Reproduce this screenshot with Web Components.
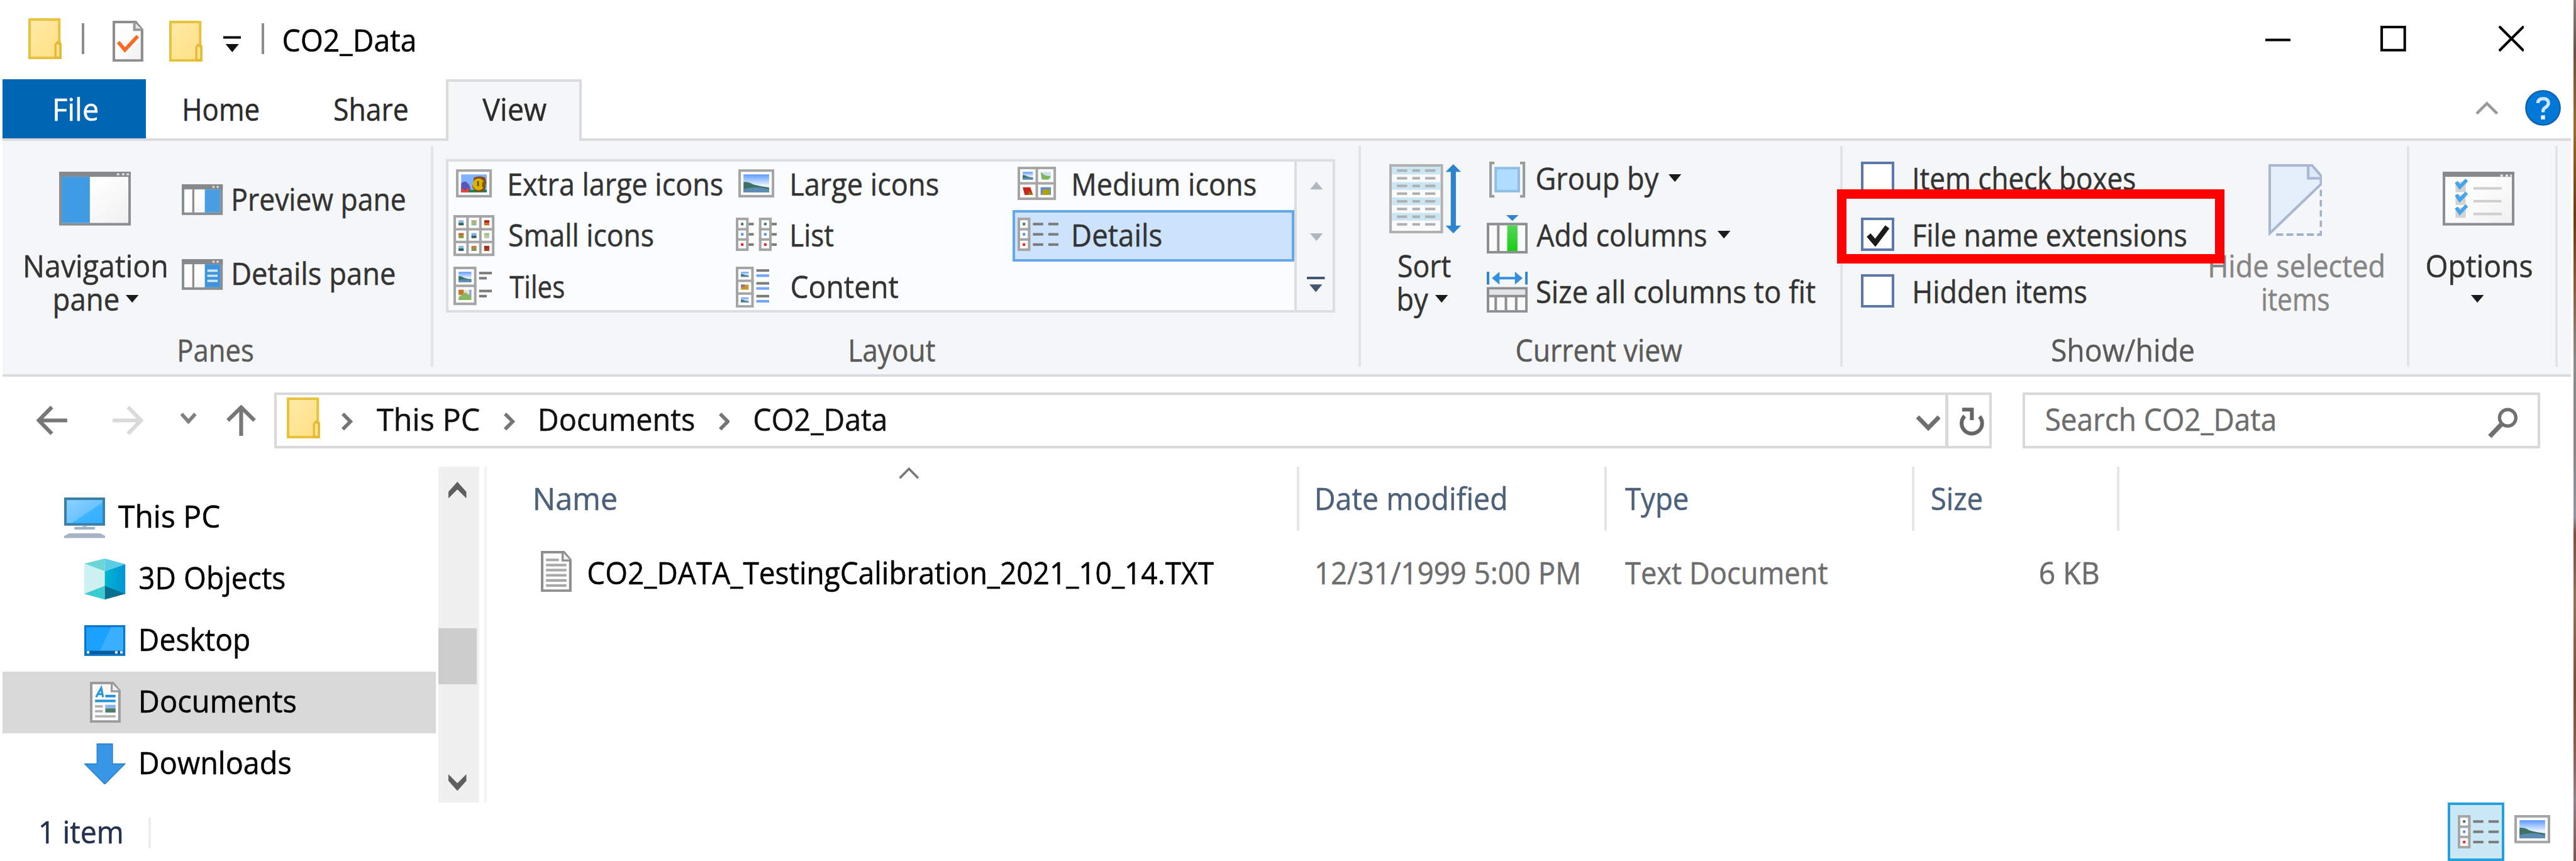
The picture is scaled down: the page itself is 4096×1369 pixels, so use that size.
<!DOCTYPE html>
<html lang="en">
<head>
<meta charset="utf-8">
<title>CO2_Data</title>
<style>
  html, body { margin: 0; padding: 0; background: #fff; overflow: hidden; }
  body { font-family: "Open Sans", "Noto Sans", sans-serif; }
</style>
</head>
<body>
<explorer-window></explorer-window>
<script>
/* Lengths are in desktop pixels (1005 x 336); the window element zooms them. */
const FONT = 12.3;
const FAMILY = '"Open Sans", "Noto Sans", sans-serif';
const measure = document.createElement('canvas').getContext('2d');

function define(name, css, html, setup) {
  const tpl = document.createElement('template');
  tpl.innerHTML = `<style>:host{display:block;box-sizing:border-box;flex:none}*{box-sizing:border-box}${css}</style>${html}`;
  customElements.define(name, class extends HTMLElement {
    connectedCallback() {
      if (this.shadowRoot) return;
      this.attachShadow({ mode: 'open' }).append(tpl.content.cloneNode(true));
      if (setup) setup(this, this.shadowRoot);
    }
  });
}

/* A label whose ink fills exactly w pixels. */
define('x-text', `
  :host{height:16px;line-height:16px;font-size:${FONT}px;white-space:nowrap;-webkit-text-stroke:.13px currentColor}
  :host([tight]){height:13px;line-height:13px}
  span{display:block;width:max-content;margin-top:.2px;transform-origin:0 0}`,
  `<span></span>`, (el, root) => {
  const s = root.querySelector('span'), t = el.getAttribute('t'), w = +el.getAttribute('w');
  s.textContent = t;
  measure.font = `100px ${FAMILY}`;
  const m = measure.measureText(t), k = FONT / 100;
  const left = -m.actualBoundingBoxLeft * k, ink = (m.actualBoundingBoxRight + m.actualBoundingBoxLeft) * k;
  const sx = w / ink;
  el.style.width = w + 'px';
  s.style.transform = `translate(var(--nx,0px),var(--ny,0px)) matrix(${sx},0,0,1,${-left * sx},0)`;
});

const pic = (x, y, w, h) => `<rect x="${x}" y="${y}" width="${w}" height="${h}" fill="url(#sky)"/><path d="M${x} ${y + h * .42}q${w * .2} -${h * .02} ${w * .4} ${h * .15}q${w * .3} ${h * .12} ${w * .6} ${h * .16}v${h * .27}h-${w}z" fill="#3d7263"/><path d="M${x} ${y + h * .82}q${w * .5} -${h * .2} ${w} ${h * .02}v${h * .16}h-${w}z" fill="#5c8bb5"/>`;
const dot = (x, y, a, b) => `<rect x="${x}" y="${y}" width="2" height="1" fill="${a}"/><rect x="${x}" y="${y + 1}" width="2" height="1" fill="${b}"/>`;
const dash = (x, y, w, c) => `<rect x="${x}" y="${y}" width="${w}" height="1" fill="${c || '#7b7b7b'}"/>`;
const cells = (x, y, w, h) => `<rect x="${x + .5}" y="${y + .5}" width="${w - 1}" height="${h - 1}" fill="#fff" stroke="#a5a5a5"/>`;
const folder = `<path d="M.5.5h11.6v9l.9.9v5.1H.5z" fill="url(#fold)" stroke="#e8c13d"/><path d="M10.6 15.3v-5l.7-.9 1.2 1v4.9z" fill="#ffe38c" stroke="#e3b935" stroke-width=".8"/>`;
const pane = (w, h, body) => `<rect x=".5" y=".5" width="${w - 1}" height="${h - 1}" fill="url(#pap)" stroke="#8a8e91"/><rect width="${w}" height="2" fill="#85898c"/>${body}`;
const chev = (w, h, d, c, sw) => [w, h, `<path d="${d}" fill="none" stroke="${c}" stroke-width="${sw}"/>`];
const lists = x => cells(x, 1, 5, 13) + `<path d="M${x} 5.5h5M${x} 9.5h5" stroke="#a5a5a5"/><rect x="${x + 2}" y="3" width="1" height="1" fill="#3b7a63"/><rect x="${x + 2}" y="7" width="1" height="1" fill="#4f8dff"/><rect x="${x + 2}" y="11" width="1" height="1" fill="#e22"/>`;

const ICONS = {
  folder: [13, 16, folder],
  props: [12, 16, `<path d="M.5.5H9l2.5 3v12H.5z" fill="url(#pap)" stroke="#8d8d8d"/><path d="M8.5.5v3h3" fill="#e8e8e8" stroke="#9a9a9a"/><path d="M2.2 8.3l2.6 3.1 5-5.4" fill="none" stroke="#fb6a22" stroke-width="1.4"/>`],
  custom: [7, 7, `<path d="M0 .1h7v1H0zM.9 3.2h5.2L3.5 6.4z" fill="#111"/>`],
  min: [10, 10, `<path d="M0 5.5h10" stroke="#000"/>`],
  max: [10, 10, `<path d="M.5.5h9v9h-9z" fill="none" stroke="#000"/>`],
  close: [10, 10, `<path d="M.2.2l9.6 9.6M9.8.2L.2 9.8" fill="none" stroke="#000" stroke-width="1"/>`],
  collapse: chev(9, 6, 'M.5 5.3l4-4 4 4', '#9a9a9a', 1.1),
  help: [14, 14, `<circle cx="7" cy="7" r="6.7" fill="#0078d7" stroke="#0d5fa8" stroke-width=".5"/><path d="M5 5.1Q5.1 3.4 7.1 3.4t2 1.7Q9.1 6.2 7.7 7 7 7.4 7 8.7" fill="none" stroke="#cfe6fb" stroke-width="1.3"/><rect x="6.2" y="9.9" width="1.6" height="1.6" fill="#e6f2fd"/>`],
  nav: [28, 21, pane(28, 21, `<rect x="1" y="2" width="11" height="18" fill="#3f9be3"/><path d="M22.5 1h1M24.5 1h1M26.3 1h1" stroke="#dedede" stroke-width=".8"/>`)],
  preview: [16, 12, pane(16, 12, `<path d="M4.5 2v9" stroke="#8a8e91" stroke-width=".8"/><rect x="9" y="2" width="6" height="9" fill="#4a9fe3"/><path d="M12 1h.8M13.6 1h.8" stroke="#dedede" stroke-width=".8"/>`)],
  details: [16, 12, pane(16, 12, `<path d="M4.5 2v9" stroke="#8a8e91" stroke-width=".8"/><rect x="9" y="2" width="6" height="9" fill="#3f95dc"/><path d="M10 4.5h4M10 6.5h4M10 8.5h4" stroke="#cfe6f8" stroke-width=".9"/><path d="M12 1h.8M13.6 1h.8" stroke="#dedede" stroke-width=".8"/>`)],
  tri: [5, 3, `<path d="M0 0h5L2.5 3z" fill="#1b1b1b"/>`],
  xl: [16, 16, cells(1, 2, 14, 11) + `<rect x="3" y="4" width="10" height="7" fill="#7fb1ff"/><path d="M3 7.5q2-2 3.6 1.6V11H3z" fill="#5a55b8"/><path d="M3 9.2l1.5 1 1.5-1 1 1.8H3z" fill="#e8413a"/><rect x="6" y="10" width="7" height="1" fill="#16824a"/><path d="M8 5.2q2-.8 4.4 0l.4 2-.6 3.2-3.2.6-1.6-2z" fill="#8a4a17"/><circle cx="9.8" cy="7.9" r="2.3" fill="#d9b300"/><path d="M9.6 6.6v2M11.6 7v2" stroke="#6b5200" stroke-width=".7"/>`],
  large: [16, 16, cells(1, 2, 14, 11) + pic(3, 4, 10, 7)],
  medium: [16, 16, cells(0, 1, 15, 13) + `<path d="M7.5 1v13M0 7.5h15" stroke="#a5a5a5"/>` + pic(2, 3, 4, 3) + `<path d="M9 3h4v3H9z" fill="#cfe0f5"/><path d="M9 3.2l2 1.3 2 .2-1 1.3H9.600z" fill="#7cb656"/><path d="M2 9h3l1 3H2.800z" fill="#c9281a"/><path d="M4.500 10.500L6 12H4z" fill="#8d7a10"/><path d="M9 9h4v3H9z" fill="#5c8ad8"/><path d="M9.800 9.800h3l-.5 2.200H9.500z" fill="#b0a10a"/>`],
  small: [16, 16, cells(0, 0, 16, 16) + `<path d="M5.500 0v16M10.500 0v16M0 5.500h16M0 10.500h16" stroke="#a5a5a5"/>` +
    dot(2, 2, '#8fb9e8', '#2d6360') + dot(7, 2, '#b7a58f', '#8cc07a') + dot(12, 2, '#b32318', '#cc6a1c') +
    dot(2, 7, '#c8603a', '#8a9a2c') + dot(7, 7, '#7fb2e6', '#2d6360') + dot(12, 7, '#9cc489', '#b3c9ae') +
    dot(2, 12, '#8fb9e8', '#2d6360') + dot(7, 12, '#c97a3c', '#7a9a5c') + dot(12, 12, '#b32318', '#a5401a')],
  list: [16, 16, lists(0) + lists(9) + [3, 7, 11].map(y => dash(5, y, 2) + dash(14, y, 2)).join('')],
  detailsview: [16, 16, lists(0) + [3, 7, 11].map(y => dash(6, y, 4) + dash(12, y, 4)).join('')],
  tiles: [16, 16, cells(0, 0, 9, 15) + `<path d="M0 7.500h9" stroke="#a5a5a5"/>` + pic(2, 2, 5, 4) + `<path d="M2 9h5v4H2z" fill="#dfe8d8"/><path d="M2 9h2v2H2z" fill="#d0702c"/><path d="M6.200 9H7v2.500h-.8z" fill="#9d9be0"/><path d="M2 12l2.500-2 2.500 1.500V13H2z" fill="#86b860"/>` + dash(10, 2, 5) + dash(10, 4, 3) + dash(10, 9, 5) + dash(10, 11, 3)],
  content: [16, 16, cells(0, 0, 7, 16) + `<path d="M0 5.500h7M0 10.500h7" stroke="#a5a5a5"/>` + pic(2, 2, 3, 2) + `<path d="M2 7h3v2H2z" fill="#c4982a"/><path d="M2 7h1.500v1H2z" fill="#9f6d9a"/>` + pic(2, 12, 3, 2) + [1, 6, 11].map(y => dash(8, y, 5) + dash(8, y + 2, 5, '#70a5ff')).join('')],
  up5: [5, 3, `<path d="M0 3h5L2.500 0z" fill="#b0b7c1"/>`],
  down5: [5, 3, `<path d="M0 0h5L2.500 3z" fill="#b0b7c1"/>`],
  more: [7, 6, `<path d="M0 0h7v1H0zM1 3h5L3.500 6z" fill="#44566f"/>`],
  sort: [29, 27, `<rect x=".5" y=".5" width="20" height="26" fill="#fafafa" stroke="#b0b0b0"/>` +
    [0, 2, 4, 6].map(i => `<rect x="1" y="${1 + i * 3}" width="19" height="3" fill="#cbe6f3"/>`).join('') +
    [0, 1, 2, 3, 4, 5, 6, 7].map(i => dash(3, 2 + i * 3, 4, '#b0b0b0') + dash(9, 2 + i * 3, 3, '#b0b0b0') + dash(14, 2 + i * 3, 4, '#b0b0b0')).join('') +
    `<path d="M25 0l3 3h-2v21h2l-3 3-3-3h2V3h-2z" fill="#2b84cd"/>`],
  group: [16, 16, `<path d="M3 1.500H1.500v13H3M13 1.500h1.500v13H13" fill="none" stroke="#9a9a9a"/><rect x="3.500" y="3.500" width="9" height="9" fill="#b0dcff" stroke="#90bfe6"/>`],
  addcol: [16, 16, `<path d="M7.600 0h4.800L10 2.300z" fill="#2f86cf"/><rect x=".5" y="3.500" width="15" height="11" fill="#fafafa" stroke="#8d9093"/><path d="M4.500 4v10" stroke="#8d9093"/><rect x="8" y="4" width="4" height="10" fill="url(#grn)"/>`],
  sizecol: [16, 16, `<path d="M.5 0v5M15.500 0v5" stroke="#2f86cf"/><path d="M2 2.500L5 0v2h6V0l3 2.500L11 5V3H5v2z" fill="#3490df"/><rect x=".5" y="6.500" width="15" height="9" fill="#fafafa" stroke="#8d9093"/><rect x="1" y="7" width="14" height="2" fill="#e4e4e4"/><path d="M0 9.500h16M3.500 9v6M7.500 9v6M11.500 9v6" stroke="#8d9093"/>`],
  hide: [21, 28, `<path d="M.5 27V.5H17l3.500 4V7.800z" fill="#e5eefb" stroke="#a9b8d2"/><path d="M15.500.5v5h5" fill="#dfe8f6" stroke="#a9b8d2"/><path d="M20.500 10v2.500M20.500 14v2.500M20.500 18v2.500M20.500 22v2.500M20.500 26v1.500M3 27.500h2.700M7 27.500h2.700M11 27.500h2.700M15 27.500h2.700M19 27.500h2" stroke="#a0b1cd"/>`],
  options: [28, 21, pane(28, 21, `<path d="M22.500 1.500h1M24.500 1.500h1M26.300 1.500h.7" stroke="#e8e8e8" stroke-width=".8"/>` + [4, 9, 14].map(y => `<rect x="5" y="${y}" width="4" height="4" fill="#d3d3d3"/><path d="M5.300 ${y}l1.400 2L9.400 ${y - .8}" fill="none" stroke="#45a4ea" stroke-width="1.400"/>` + dash(12, y + 2, 11, '#cfcfcf')).join(''))],
  back: [12, 12, `<path d="M.8 6h11.200M6 .8L.9 6 6 11.200" fill="none" stroke="#777" stroke-width="1.500"/>`],
  fwd: [12, 12, `<path d="M0 6h11.200M6 .8L11.100 6 6 11.200" fill="none" stroke="#dadada" stroke-width="1.500"/>`],
  recent: chev(6.200, 4.500, 'M.4.500l2.700 3 2.700-3', '#808080', 1.400),
  upnav: [12, 12, `<path d="M6 12V1M.8 6L6 .9 11.200 6" fill="none" stroke="#777" stroke-width="1.500"/>`],
  crumb: chev(4.400, 7, 'M.5.500l3 3-3 3', '#757575', 1.400),
  drop: chev(9.400, 6, 'M.5.700l4.200 4.300L8.900.700', '#6f6f6f', 1.700),
  refresh: [10, 11.500, `<path d="M2.200 3.300A4 4 0 1 0 8 3.500" fill="none" stroke="#666" stroke-width="1.500"/><path d="M1.200.800H5V4.900" fill="none" stroke="#666" stroke-width="1.500"/>`],
  search: [12, 12, `<circle cx="7.700" cy="4" r="3.200" fill="none" stroke="#707070" stroke-width="1.300"/><path d="M5.400 6.400L.7 11.300" stroke="#707070" stroke-width="1.800"/>`],
  sbup: [7, 6.500, `<path d="M0 6.500V3.900L3.500 0 7 3.900v2.600L3.500 3z" fill="#5f5f5f"/>`],
  sbdown: [7, 6.500, `<path d="M0 0v2.600l3.500 3.900L7 2.600V0L3.500 3.500z" fill="#5f5f5f"/>`],
  sortcaret: chev(8, 5, 'M.4 4.500L4 .8l3.600 3.700', '#777', .9),
  pc: [16, 16, `<rect x=".5" y=".5" width="15" height="10" fill="url(#scr)" stroke="#3a7fa8"/><rect x="7.200" y="11" width="1.600" height="1" fill="#b5c3cf"/><rect x="4" y="11.500" width="8" height="1" fill="#9db0c4"/><path d="M2 14h12l2 1v.8H0V15z" fill="#a6b4c6"/>`],
  cube: [16, 16, `<path d="M0 2l8-2v5z" fill="#6ad6d6"/><path d="M8 0l8 2.200L8 5z" fill="#5ccbe6"/><path d="M0 2l8 3v6l-8 3z" fill="#cdf0f0"/><path d="M16 2.200L8 5v6l8 3z" fill="url(#cb)"/><path d="M0 13.800L8 10.700V16z" fill="#38cbd0"/><path d="M8 10.700l8 3.100L8 16z" fill="#0a6f8c"/>`],
  desktop: [16, 12, `<rect x=".4" y=".4" width="15.200" height="11.200" fill="#1ba1ff" stroke="#0b78cc" stroke-width=".8"/><path d="M10.500.8h4.700v9.200H6z" fill="#3aaeff"/><rect x=".8" y="10" width="14.400" height="1.300" fill="#0b5c96"/><path d="M1 10.600h1M12 10.600h1M14 10.600h1" stroke="#e8f4fd"/>`],
  docs: [12, 16, `<path d="M.5.5H9l2.500 3v12H.5z" fill="#fbfbfb" stroke="#9b9b9b"/><path d="M8.500.5v3.200h3" fill="#f2f2f2" stroke="#9b9b9b" stroke-width=".8"/><path d="M2.400 6l2-3.600.7 3.600M3.200 4.800h2" fill="none" stroke="#2a97dc" stroke-width=".8"/><path d="M6 5.600h4M2 7.500h8" stroke="#2493da"/><path d="M2 9.600h3M2 11.500h3M2 13.500h8" stroke="#b0b0b0" stroke-width=".9"/><rect x="6" y="9" width="4" height="1.400" fill="#8eb4f5"/><rect x="6" y="10.400" width="4" height="1.600" fill="#4c7a63"/>`],
  download: [16, 16, `<path d="M5 .200h6V8h4.800L8 15.900.2 8H5z" fill="#3797e6" stroke="#2f83c9" stroke-width=".4"/>`],
  text: [12, 16, `<path d="M.5.5H9l2.500 3v12H.5z" fill="#fbfbfb" stroke="#8f8f8f"/><path d="M8.500.5v3.200h3" fill="#f2f2f2" stroke="#8f8f8f" stroke-width=".8"/><path d="M2 3.500h5M2 5.500h8M2 7.500h8M2 9.500h8M2 11.500h8M2 13.500h8" stroke="#a8a8a8" stroke-width="1"/>`],
  thumbs: [14, 11, cells(0, 0, 14, 11) + pic(2, 2, 10, 7)],
  check: [13, 13, `<path d="M3 6.800l2.600 3L10.300 3.600" fill="none" stroke="#1b1b1b" stroke-width="2"/>`],
};
const DEFS = `<defs><linearGradient id="sky" x2="0" y2="1"><stop stop-color="#5c9aff"/><stop offset=".6" stop-color="#e6f2fd"/></linearGradient>
<linearGradient id="fold" x2="1" y2="1"><stop stop-color="#ffeaa8"/><stop offset="1" stop-color="#ffdf80"/></linearGradient>
<linearGradient id="pap" x2="1" y2="1"><stop offset=".4" stop-color="#fdfdfd"/><stop offset="1" stop-color="#f0f0f0"/></linearGradient>
<linearGradient id="grn" x2="0" y2="1"><stop stop-color="#55d555"/><stop offset="1" stop-color="#17cf17"/></linearGradient>
<linearGradient id="scr" x2="1" y2="1"><stop offset=".1" stop-color="#87cfff"/><stop offset=".55" stop-color="#6cc4ff"/><stop offset=".56" stop-color="#3fb4ff"/><stop offset="1" stop-color="#33aeff"/></linearGradient>
<linearGradient id="cb" x2="1" y2="0"><stop stop-color="#00b6cf"/><stop offset="1" stop-color="#0093d8"/></linearGradient></defs>`;
define('x-icon', `svg{display:block}`, ``, (el, root) => {
  const [w, h, body] = ICONS[el.getAttribute('name')];
  el.style.width = w + 'px'; el.style.height = h + 'px';
  root.innerHTML += `<svg width="${w}" height="${h}" viewBox="0 0 ${w} ${h}">${DEFS}${body}</svg>`;
});

/* Markup helpers: m(left, top) gives the margin in front of an item. */
const m = (l, t = 0) => `style="margin:${t}px 0 0 ${l}px"`;
const T = (t, w, l = 0, top = 0, color = '', tight = '') => `<x-text ${tight} t="${t}" w="${w}" style="margin:${top}px 0 0 ${l}px${color ? ';color:' + color : ''}"></x-text>`;
const I = (n, l = 0, top = 0) => `<x-icon name="${n}" ${m(l, top)}></x-icon>`;

define('title-bar', `:host{display:flex;align-items:flex-start;height:31px;padding-right:19.300px;color:#000;--nx:.3px;--ny:.2px}
  .sep{width:1px;height:12px;background:#8c8c8c}.gap{flex:1}`,
  I('folder', 11, 7) + `<div class="sep" ${m(8, 9)}></div>` + I('props', 11, 8) + I('folder', 10, 8) + I('custom', 8, 14) +
  `<div class="sep" ${m(8, 9)}></div>` + T('CO2_Data', 51, 7.5, 7) + `<div class="gap"></div>` + I('min', 0, 10) + I('max', 35, 10) + I('close', 36, 10));

define('ribbon-tabs', `:host{display:flex;align-items:flex-start;height:24px;margin-left:1px;width:1002px;border-bottom:1px solid #dadbdc;color:#2b2b2b;--nx:.3px;--ny:.3px}
  .file{display:flex;width:56px;height:23px;background:#0065b3;color:#fff}
  .view{display:flex;width:53px;height:24px;background:#f5f6f7;border:1px solid #dadbdc;border-bottom:0}.gap{flex:1}`,
  `<div class="file">${T('File', 16.6, 20, 3)}</div>` + T('Home', 28.9, 14.6, 3) + T('Share', 28.3, 29.9, 3) +
  `<div class="view" ${m(15.3)}>${T('View', 25, 13, 2)}</div><div class="gap"></div>` + I('collapse', 0, 8) + `<x-icon name="help" style="margin:4px 3.800px 0 10.500px"></x-icon>`);

define('ribbon-group', `:host{display:flex;flex-direction:column;height:91px}
  .body{display:flex;align-items:flex-start;height:73px}`, `<div class="body"><slot></slot></div><slot name="label"></slot>`);
define('ribbon-sep', `:host{width:1px;height:86px;margin-top:2px;background:#e2e3e4}`, ``);
define('ribbon-column', `:host{display:flex;flex-direction:column;align-items:flex-start}`, `<slot></slot>`);
define('x-row', `:host{display:flex;align-items:flex-start}`, `<slot></slot>`);

define('gallery-item', `:host{display:flex;align-items:flex-start;width:110px;height:20px}
  :host([selected]){background:#cce3fb;box-shadow:inset 0 0 0 1px #66a7e8}`, `<slot></slot>`);
const G = (icon, t, w, sel = '', l = 5.600) => `<gallery-item ${sel}>${I(icon, 2, 2)}${T(t, w, l, 1)}</gallery-item>`;
define('layout-gallery', `:host{display:flex;width:347px;height:60px;background:#fafcfe;box-shadow:inset 0 0 0 1px #dcdddf}
  .grid{display:grid;grid-template-columns:110px 110px 110px;grid-auto-rows:20px;padding-left:1px;width:331px}
  .scroll{display:flex;flex-direction:column;width:15px;margin:1px 1px 1px 0;border-left:1px solid #dcdddf;background:#f5f6f7}`,
  `<div class="grid">${G('xl', 'Extra large icons', 83)}${G('large', 'Large icons', 57)}${G('medium', 'Medium icons', 71)}` +
  `${G('small', 'Small icons', 56)}${G('list', 'List', 16.2)}${G('detailsview', 'Details', 34.2, 'selected')}` +
  `${G('tiles', 'Tiles', 21.2, '', 5.4)}${G('content', 'Content', 41.500)}</div>` +
  `<div class="scroll">${I('up5', 5, 8)}${I('down5', 5, 17)}${I('more', 4, 14)}</div>`);

define('check-item', `:host{display:flex;align-items:flex-start;height:22px}
  .box{width:13px;height:13px;margin-top:2px;background:#fff;box-shadow:inset 0 0 0 1px #5c77a9}`,
  `<div class="box"></div><slot></slot>`, (el, root) => {
  if (el.hasAttribute('checked')) root.querySelector('.box').innerHTML = '<x-icon name="check"></x-icon>';
});

const L = (t, w, l) => `<x-text slot="label" t="${t}" w="${w}" style="margin-left:${l}px;color:#5a5a5a"></x-text>`;
define('ribbon-bar', `:host{display:flex;position:relative;margin-left:1px;width:1002px;height:92px;background:#f5f6f7;border-bottom:1px solid #dadbdc;color:#333;--nx:.3px;--ny:.3px}
  .mark{position:absolute;left:715.700px;top:18.900px;width:151.200px;height:28.800px;border:3.800px solid #f00}`,
  `<ribbon-group style="width:167px"><ribbon-column style="width:70px">${I('nav', 22, 12)}${T('Navigation', 55, 8.600, 8.500, '', 'tight')}
     <x-row>${T('pane', 24.700, 20, 0, '', 'tight')}${I('tri', 3.500, 5.500)}</x-row></ribbon-column>
   <ribbon-column><x-row style="margin-top:14px">${I('preview', 0, 3)}${T('Preview pane', 66.800, 3.800)}</x-row>
     <x-row style="margin-top:13px">${I('details', 0, 3)}${T('Details pane', 62.800, 3.800)}</x-row></ribbon-column>
   ${L('Panes', 28.700, 68.700)}</ribbon-group><ribbon-sep></ribbon-sep>` +
  `<ribbon-group style="width:361px"><layout-gallery ${m(5, 7)}></layout-gallery>${L('Layout', 33, 162.600)}</ribbon-group><ribbon-sep></ribbon-sep>` +
  `<ribbon-group style="width:187px"><ribbon-column style="width:38px;margin-left:11px">${I('sort', 0, 9)}${T('Sort', 20.200, 3.500, 5.500, '', 'tight')}
     <x-row>${T('by', 11.500, 3.500, 0, '', 'tight')}${I('tri', 3, 5.500)}</x-row></ribbon-column>
   <ribbon-column style="margin-top:6px"><x-row style="height:22px">${I('group', 0, 1)}${T('Group by', 47.500, 3.500)}${I('tri', 4, 7)}</x-row>
     <x-row style="height:22px">${I('addcol', 0, 1)}${T('Add columns', 66.200, 3.300)}${I('tri', 4.500, 7)}</x-row>
     <x-row style="height:22px">${I('sizecol', 0, 1)}${T('Size all columns to fit', 108.500, 3.500)}</x-row></ribbon-column>
   ${L('Current view', 64.400, 60.600)}</ribbon-group><ribbon-sep></ribbon-sep>` +
  `<ribbon-group style="width:220px"><ribbon-column style="margin:6px 0 0 7px;width:136px">
     <check-item>${T('Item check boxes', 86, 7.600)}</check-item><check-item checked>${T('File name extensions', 106, 7.600)}</check-item><check-item>${T('Hidden items', 67, 7.600)}</check-item></ribbon-column>
   <ribbon-column>${I('hide', 23, 9)}${T('Hide selected', 67.500, 0, 4.500, '#858585', 'tight')}${T('items', 25.700, 20.700, 0, '#858585', 'tight')}</ribbon-column>
   ${L('Show/hide', 55.100, 81.500)}</ribbon-group><ribbon-sep></ribbon-sep>` +
  `<ribbon-group style="width:57px"><ribbon-column>${I('options', 13, 12)}${T('Options', 40.900, 6.700, 7)}${I('tri', 24, 4)}</ribbon-column></ribbon-group><ribbon-sep></ribbon-sep>
   <div class="mark"></div>`);

define('address-bar', `:host{display:flex;align-items:flex-start;height:35px;padding-top:6px;color:#111;--ny:.2px}
  .box{display:flex;align-items:flex-start;height:22px;border:1px solid #d9d9d9;background:#fff}.gap{flex:1}
  .div{width:1px;height:20px;background:#d9d9d9}`,
  I('back', 14.200, 5) + I('fwd', 17.800, 5) + I('recent', 14.500, 8) + I('upnav', 11.500, 5) +
  `<div class="box" style="margin-left:6.800px;width:670px">${I('folder', 4, 1)}${I('crumb', 8.200, 7)}${T('This PC', 40, 9.400, 1)}${I('crumb', 9.700, 7)}${T('Documents', 60, 9.800, 1)}${I('crumb', 9.500, 7)}${T('CO2_Data', 51, 9.800, 1)}
   <div class="gap"></div>${I('drop', 0, 8)}<div class="div" ${m(2)}></div><x-icon name="refresh" style="margin:5px 1.600px 0 4.400px"></x-icon></div>
   <div class="box" style="margin-left:12px;width:202px;color:#6d6d6d">${T('Search CO2_Data', 89, 8.400, 1)}<div class="gap"></div><x-icon name="search" style="margin:5px 7.400px 0 0"></x-icon></div>`);

define('nav-item', `:host{display:flex;align-items:flex-start;height:24px;width:169px;padding-left:24px}
  :host([child]){padding-left:32px}:host([selected]){background:#d9d9d9}`, `<slot></slot>`);
define('nav-tree', `:host{width:170px;padding:8px 0 0 1px;color:#000}`,
  `<nav-item>${I('pc', 0, 4)}${T('This PC', 39.500, 5.200, 3)}</nav-item>
   <nav-item child>${I('cube', 0, 4)}${T('3D Objects', 56.600, 5.500, 3)}</nav-item>
   <nav-item child>${I('desktop', 0, 6)}${T('Desktop', 42.200, 6, 3)}</nav-item>
   <nav-item child selected>${I('docs', 2, 4)}${T('Documents', 60.400, 8, 3)}</nav-item>
   <nav-item child>${I('download', 0, 4)}${T('Downloads', 58.400, 6, 3)}</nav-item>`);
define('scroll-bar', `:host{display:flex;flex-direction:column;width:16px;height:131px;background:#f0f0f0}
  .thumb{width:15px;height:22px;margin-top:50.500px;background:#cdcdcd}`,
  I('sbup', 4, 6) + `<div class="thumb"></div>` + I('sbdown', 4, 35));
define('column-head', `:host{display:flex;align-items:flex-start;height:25px;border-right:1px solid #e5e5e5}`, `<slot></slot>`);
define('file-list', `:host{flex:1;display:flex;flex-direction:column}
  .head,.row{display:flex;align-items:flex-start}.head{color:#4c607a}.row{height:20px;margin-top:6px;color:#6d6d6d}`,
  `<div class="head"><column-head style="width:317px">${T('Name', 31.600, 18.700, 4)}${I('sortcaret', 110.400, 0)}</column-head>
   <column-head style="width:120px">${T('Date modified', 73.600, 6.900, 4)}</column-head>
   <column-head style="width:120px">${T('Type', 24.300, 7, 4)}</column-head>
   <column-head style="width:80px">${T('Size', 19.300, 6.700, 4)}</column-head></div>
   <div class="row">${I('text', 21, 2)}${T('CO2_DATA_TestingCalibration_2021_10_14.TXT', 243.900, 6.700, 2, '#000')}${T('12/31/1999 5:00 PM', 102.100, 40.300, 2)}${T('Text Document', 79, 18, 2)}${T('6 KB', 22.700, 83, 2)}</div>`);
define('status-bar', `:host{display:flex;align-items:flex-start;height:23px;color:#243050}
  .div{width:1px;height:12px;background:#ededed}.gap{flex:1}
  .btn{display:flex;width:22px;height:23px;background:#cbe8f6;border:1px solid #26a0da}`,
  T('1 item', 31.500, 16, 3) + `<div class="div" ${m(10.500, 6)}></div><div class="gap"></div><div class="btn">${I('detailsview', 3, 3)}</div>` +
  `<x-icon name="thumbs" style="margin:5px 9px 0 4px"></x-icon>`);

define('explorer-window', `:host{display:flex;width:1005px;height:336px;zoom:4.07562;background:#fff;overflow:hidden}
  .win{width:1004px;height:336px}
  .edge{width:1px;height:336px;background:linear-gradient(#8a8480 0,#6a5145 6%,#a06a2c 15%,#6a3a12 25%,#8a5a3c 33%,#8f8b8a 42%,#8c8488 52%,#95949f 60%,#7c4f42 62%,#96705f 70%,#7d4a3b 80%,#8c6054 88%,#94818a 93%,#7d5548 100%)}
  .main{display:flex;height:131px}.div{width:1px;height:131px;margin-left:2px;background:#f3f3f3}`,
  `<div class="win"><title-bar></title-bar><ribbon-tabs></ribbon-tabs><ribbon-bar></ribbon-bar><address-bar></address-bar>
   <div class="main"><nav-tree></nav-tree><scroll-bar style="margin-left:1px"></scroll-bar><div class="div"></div><file-list></file-list></div>
   <status-bar></status-bar></div><div class="edge"></div>`);
</script>
</body>
</html>
